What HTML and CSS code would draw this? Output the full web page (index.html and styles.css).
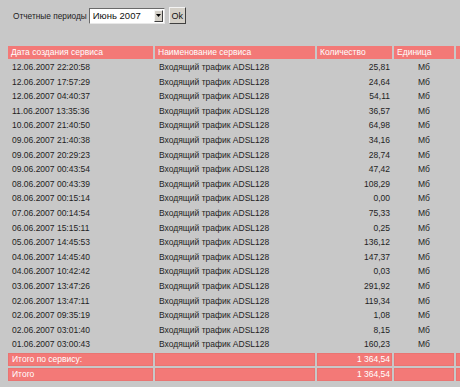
FILE: index.html
```html
<!DOCTYPE html>
<html lang="ru">
<head>
<meta charset="utf-8">
<title>Отчетные периоды</title>
<link rel="stylesheet" href="styles.css">
</head>
<body>
<form class="period">
  <label class="period-label" for="period">Отчетные периоды</label>
  <span class="combo">
    <select id="period" class="combo-select">
      <option>Июнь 2007</option>
    </select>
    <span class="combo-btn"><svg width="5" height="3" viewBox="0 0 5 3"><path d="M0 0H5L2.5 3Z" fill="#000"/></svg></span>
  </span>
  <button type="button" class="ok">Ok</button>
</form>
<div class="report-wrap">
<table class="report">
  <colgroup>
    <col class="c-date"><col class="c-name"><col class="c-qty"><col class="c-unit"><col class="c-extra">
  </colgroup>
  <thead>
    <tr class="head"><th>Дата создания сервиса</th><th>Наименование сервиса</th><th>Количество</th><th>Единица</th><th></th></tr>
  </thead>
  <tbody>
    <tr><td>12.06.2007 22:20:58</td><td>Входящий трафик ADSL128</td><td class="num">25,81</td><td class="unit">Мб</td><td></td></tr>
    <tr><td>12.06.2007 17:57:29</td><td>Входящий трафик ADSL128</td><td class="num">24,64</td><td class="unit">Мб</td><td></td></tr>
    <tr><td>12.06.2007 04:40:37</td><td>Входящий трафик ADSL128</td><td class="num">54,11</td><td class="unit">Мб</td><td></td></tr>
    <tr><td>11.06.2007 13:35:36</td><td>Входящий трафик ADSL128</td><td class="num">36,57</td><td class="unit">Мб</td><td></td></tr>
    <tr><td>10.06.2007 21:40:50</td><td>Входящий трафик ADSL128</td><td class="num">64,98</td><td class="unit">Мб</td><td></td></tr>
    <tr><td>09.06.2007 21:40:38</td><td>Входящий трафик ADSL128</td><td class="num">34,16</td><td class="unit">Мб</td><td></td></tr>
    <tr><td>09.06.2007 20:29:23</td><td>Входящий трафик ADSL128</td><td class="num">28,74</td><td class="unit">Мб</td><td></td></tr>
    <tr><td>09.06.2007 00:43:54</td><td>Входящий трафик ADSL128</td><td class="num">47,42</td><td class="unit">Мб</td><td></td></tr>
    <tr><td>08.06.2007 00:43:39</td><td>Входящий трафик ADSL128</td><td class="num">108,29</td><td class="unit">Мб</td><td></td></tr>
    <tr><td>08.06.2007 00:15:14</td><td>Входящий трафик ADSL128</td><td class="num">0,00</td><td class="unit">Мб</td><td></td></tr>
    <tr><td>07.06.2007 00:14:54</td><td>Входящий трафик ADSL128</td><td class="num">75,33</td><td class="unit">Мб</td><td></td></tr>
    <tr><td>06.06.2007 15:15:11</td><td>Входящий трафик ADSL128</td><td class="num">0,25</td><td class="unit">Мб</td><td></td></tr>
    <tr><td>05.06.2007 14:45:53</td><td>Входящий трафик ADSL128</td><td class="num">136,12</td><td class="unit">Мб</td><td></td></tr>
    <tr><td>04.06.2007 14:45:40</td><td>Входящий трафик ADSL128</td><td class="num">147,37</td><td class="unit">Мб</td><td></td></tr>
    <tr><td>04.06.2007 10:42:42</td><td>Входящий трафик ADSL128</td><td class="num">0,03</td><td class="unit">Мб</td><td></td></tr>
    <tr><td>03.06.2007 13:47:26</td><td>Входящий трафик ADSL128</td><td class="num">291,92</td><td class="unit">Мб</td><td></td></tr>
    <tr><td>02.06.2007 13:47:11</td><td>Входящий трафик ADSL128</td><td class="num">119,34</td><td class="unit">Мб</td><td></td></tr>
    <tr><td>02.06.2007 09:35:19</td><td>Входящий трафик ADSL128</td><td class="num">1,08</td><td class="unit">Мб</td><td></td></tr>
    <tr><td>02.06.2007 03:01:40</td><td>Входящий трафик ADSL128</td><td class="num">8,15</td><td class="unit">Мб</td><td></td></tr>
    <tr><td>01.06.2007 03:00:43</td><td>Входящий трафик ADSL128</td><td class="num">160,23</td><td class="unit">Мб</td><td></td></tr>
  </tbody>
  <tfoot>
    <tr class="total"><td>Итого по сервису:</td><td></td><td class="num">1 364,54</td><td></td><td></td></tr>
    <tr class="total"><td>Итого</td><td></td><td class="num">1 364,54</td><td></td><td></td></tr>
  </tfoot>
</table>
</div>
</body>
</html>
```
FILE: styles.css
```css
html, body {
  margin: 0;
  padding: 0;
  background: #c8c8c8;
}
body {
  font-family: "Liberation Sans", Arial, sans-serif;
  font-size: 8.5px;
  color: #1e1e1e;
}
.period {
  display: flex;
  align-items: center;
  margin: 0;
  padding: 7px 0 0 13px;
  height: 17px;
}
.period-label {
  font-size: 8.3px;
  color: #222;
  margin-right: 2px;
}
.combo {
  display: flex;
  align-items: stretch;
  width: 76px;
  height: 16px;
  box-sizing: border-box;
  background: #fff;
  border: 1px solid;
  border-color: #6a6a6a #e8e8e8 #e8e8e8 #6a6a6a;
  padding: 1px;
}
.combo-select {
  appearance: none;
  -webkit-appearance: none;
  flex: 1;
  min-width: 0;
  border: 0;
  margin: 0;
  padding: 0 0 0 2px;
  background: #fff;
  font-family: "Liberation Sans", Arial, sans-serif;
  font-size: 9.5px;
  color: #111;
  outline: none;
}
.combo-btn {
  width: 9px;
  display: flex;
  align-items: center;
  justify-content: center;
  background: #d4d0c8;
  box-sizing: border-box;
  border: 1px solid;
  border-color: #f4f4f4 #404040 #404040 #f4f4f4;
}
.ok {
  margin: 0 0 0 4px;
  width: 17px;
  height: 17px;
  padding: 0;
  box-sizing: border-box;
  background: #d4d0c8;
  border: 1px solid;
  border-color: #f4f4f4 #404040 #404040 #f4f4f4;
  font-family: "Liberation Sans", Arial, sans-serif;
  font-size: 9px;
  color: #111;
}
.report-wrap {
  width: 460px;
  overflow: hidden;
  padding-top: 19.5px;
}
.report {
  margin: 0 0 0 6px;
  border-collapse: separate;
  border-spacing: 2px;
  table-layout: fixed;
  width: 511px;
}
.c-date { width: 145px; }
.c-name { width: 160px; }
.c-qty { width: 75px; }
.c-unit { width: 60px; }
.c-extra { width: 61px; }
.report th,
.report td {
  padding: 0 2px 0 4px;
  white-space: nowrap;
  overflow: hidden;
  text-align: left;
  font-weight: normal;
}
.report td {
  height: 12.6px;
  line-height: 12.6px;
}
.report .head th {
  height: 13.5px;
  line-height: 13.5px;
  padding-left: 3px;
  background: #f37977;
  color: #fff;
}
.report .num {
  text-align: right;
}
.report .unit {
  text-align: center;
  padding: 0;
}
.report .total td {
  height: 13px;
  line-height: 13px;
  background: #f37977;
  color: #fff;
  box-shadow: inset 0 0 0 1px #ea7472;
}
```
